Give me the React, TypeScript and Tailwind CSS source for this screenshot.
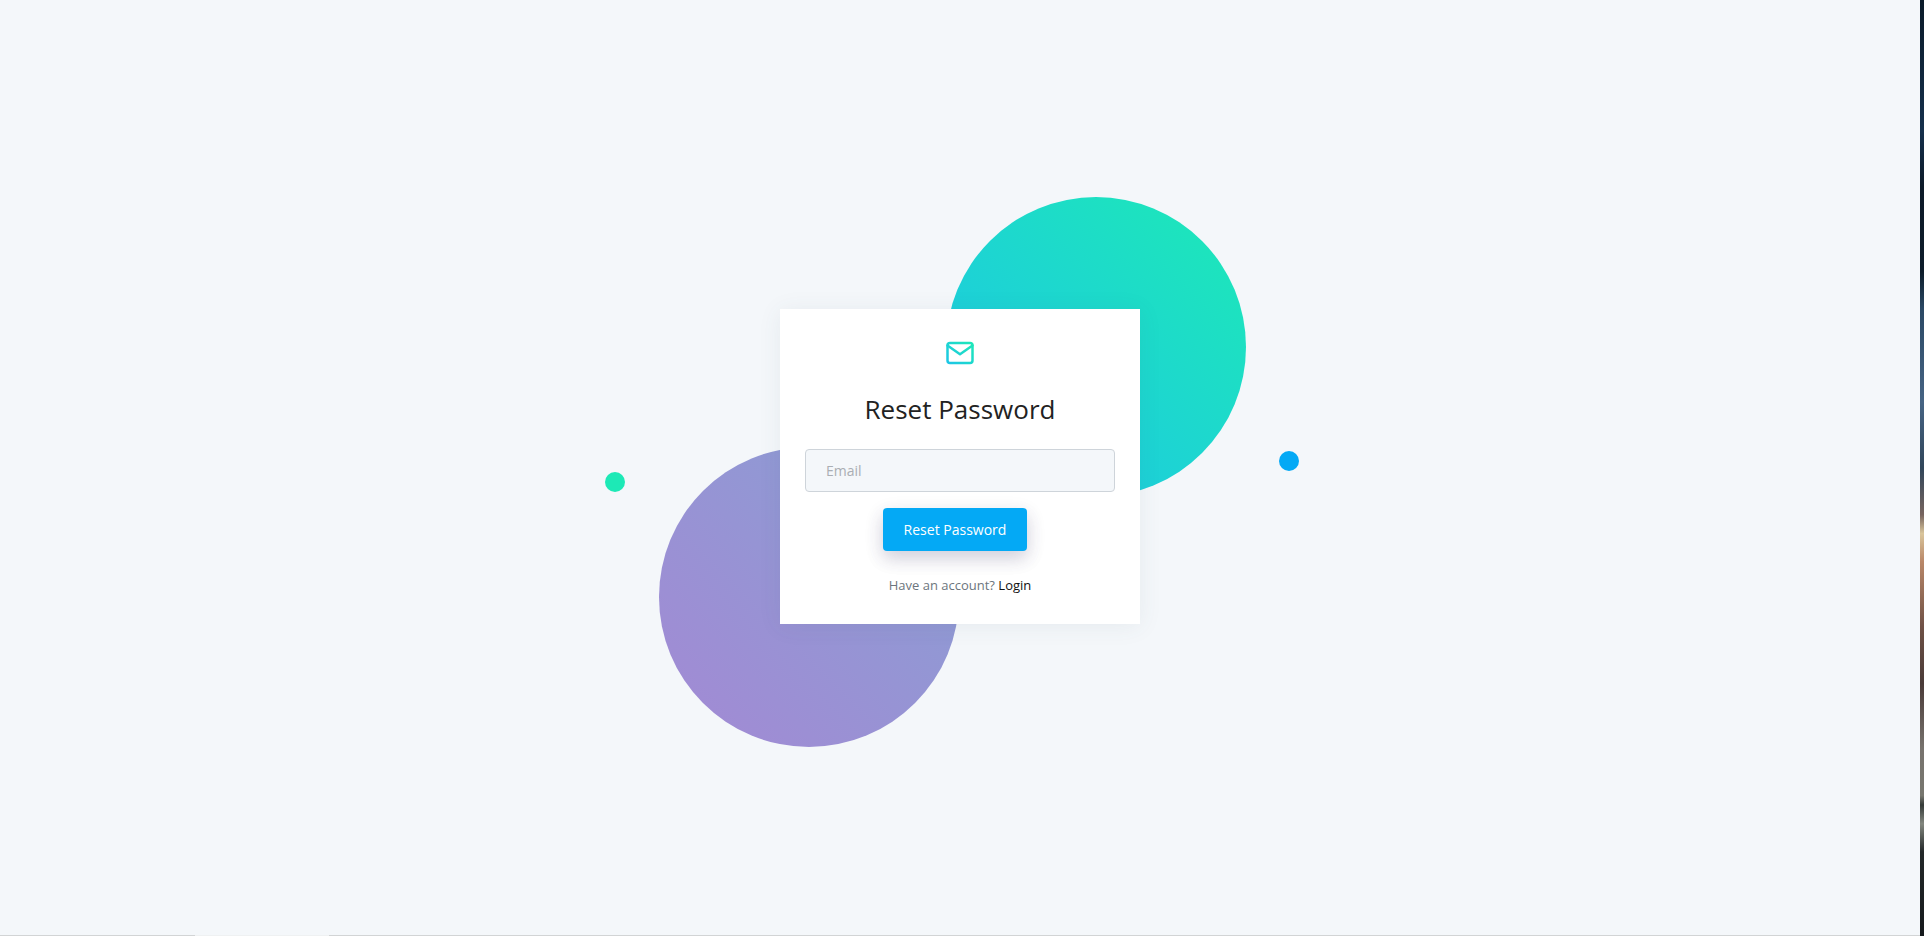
import React from "react";

function MailIcon() {
  return (
    <svg className="size-[30px]" viewBox="0 0 24 24" fill="none" stroke="url(#mail-gradient)" strokeWidth="2" strokeLinecap="round" strokeLinejoin="round" aria-hidden="true">
      <defs>
        <linearGradient id="mail-gradient" gradientUnits="userSpaceOnUse" x1="22" y1="2" x2="2" y2="22">
          <stop offset="0" stopColor="#1de9b6" />
          <stop offset="1" stopColor="#1dc4e9" />
        </linearGradient>
      </defs>
      <path d="M4 4h16c1.100 0 2 .9 2 2v12c0 1.100-.9 2-2 2H4c-1.100 0-2-.9-2-2V6c0-1.100.9-2 2-2z" />
      <path d="M22 6l-10 7L2 6" />
    </svg>
  );
}

function BackgroundShapes() {
  return (
    <div aria-hidden="true">
      <span className="absolute -top-28 -right-[106px] size-[300px] rounded-full bg-[linear-gradient(-135deg,#1de9b6_0%,#1dc4e9_100%)]" />
      <span className="absolute -bottom-[123px] -left-[121px] size-[300px] rounded-full bg-[linear-gradient(-135deg,#899fd4_0%,#a389d4_100%)]" />
      <span className="absolute top-[163px] -left-[175px] size-5 rounded-full bg-[#1de9b6]" />
      <span className="absolute top-[142px] -right-[159px] size-5 rounded-full bg-[#04a9f5]" />
    </div>
  );
}

export default function App() {
  return (
    <div className="flex min-h-screen bg-[#f4f7fa] font-['Open_Sans',sans-serif] text-sm text-[#888888]">
      <div className="flex flex-1 flex-col">
        <main className="flex flex-1 items-center justify-center pb-0.5">
          <div className="relative w-[360px]">
            <BackgroundShapes />
            <form className="relative flex flex-col items-center bg-white px-[25px] pt-[29px] pb-[29px] shadow-[0_2px_22px_0_rgba(69,90,100,0.08)]" onSubmit={(e) => e.preventDefault()}>
              <MailIcon />
              <h3 className="mt-[23px] text-[26px] leading-9 font-normal text-[#222222]">Reset Password</h3>
              <input
                type="email"
                aria-label="Email"
                placeholder="Email"
                className="mt-[22px] h-[43px] w-full rounded-[4px] border border-[#ced4da] bg-[#f4f7fa] px-5 text-sm text-[#495057] outline-none placeholder:text-[#aaaeb3]"
              />
              <button className="mt-4 mr-[10px] h-[43px] rounded-[4px] bg-[#04a9f5] px-[21px] text-sm font-medium text-white shadow-[0_8px_17px_0_rgba(62,57,107,0.14),0_6px_20px_0_rgba(62,57,107,0.12)]">
                Reset Password
              </button>
              <p className="mt-6 text-[13px] leading-5 text-[#6c757d]">
                Have an account?{" "}
                <a href="#login" className="font-medium text-[#111111]">
                  Login
                </a>
              </p>
            </form>
          </div>
        </main>
        <div className="flex h-px bg-[#d2d4d5]">
          <div className="ml-[195px] w-[134px] bg-[#eff1f2]" />
        </div>
      </div>
      <div className="w-1 bg-[linear-gradient(to_bottom,#0a1a29_0%,#15304c_14%,#0c1a28_20%,#0d1c2a_29%,#2b4965_33%,#466484_43%,#31465a_50%,#77655f_55%,#d9c59b_57%,#b98768_60%,#6f5146_67%,#4a3b38_73%,#77736e_80%,#77776f_85%,#343a38_86%,#83877f_88%,#232829_91%,#15191c_100%)]" />
    </div>
  );
}
